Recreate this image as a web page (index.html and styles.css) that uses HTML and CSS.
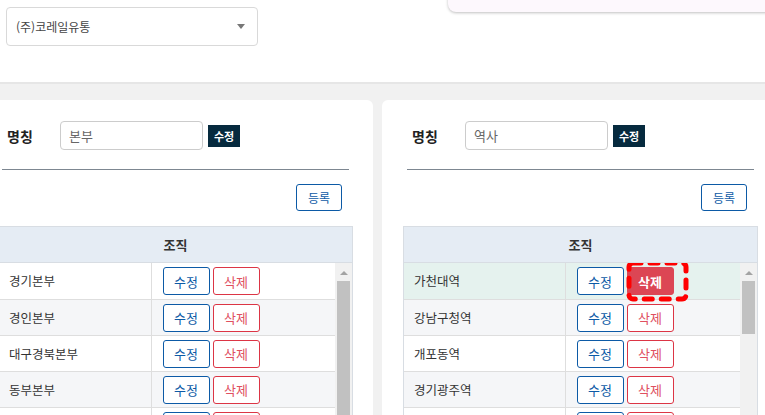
FILE: index.html
```html
<!DOCTYPE html>
<html lang="ko">

<head>
    <meta charset="UTF-8">
    <meta name="viewport" content="width=device-width, initial-scale=1.0">
    <title>조직 관리</title>
    <link rel="stylesheet" href="styles.css">
</head>

<body>
    <div class="toast"></div>

    <header class="top">
        <div class="select">
            <span>(주)코레일유통</span>
            <span class="caret"></span>
        </div>
    </header>

    <main class="panels">
        <section class="panel">
            <div class="name-row">
                <label>명칭</label>
                <input type="text" value="본부">
                <button class="btn-dark">수정</button>
            </div>
            <hr class="divider">
            <div class="actions">
                <button class="btn-reg">등록</button>
            </div>
            <div class="grid">
                <div class="grid-head">조직</div>
                <div class="grid-body">
                    <div class="rows">
                        <table class="narrow">
                            <tr><td class="name">경기본부</td><td class="act"><button class="btn-edit">수정</button><button class="btn-del">삭제</button></td></tr>
                            <tr><td class="name">경인본부</td><td class="act"><button class="btn-edit">수정</button><button class="btn-del">삭제</button></td></tr>
                            <tr><td class="name">대구경북본부</td><td class="act"><button class="btn-edit">수정</button><button class="btn-del">삭제</button></td></tr>
                            <tr><td class="name">동부본부</td><td class="act"><button class="btn-edit">수정</button><button class="btn-del">삭제</button></td></tr>
                            <tr><td class="name">부산본부</td><td class="act"><button class="btn-edit">수정</button><button class="btn-del">삭제</button></td></tr>
                            <tr><td class="name">서울본부</td><td class="act"><button class="btn-edit">수정</button><button class="btn-del">삭제</button></td></tr>
                        </table>
                    </div>
                    <div class="scrollbar">
                        <span class="arrow"></span>
                        <span class="thumb" style="height: 180px"></span>
                    </div>
                </div>
            </div>
        </section>

        <section class="panel">
            <div class="name-row">
                <label>명칭</label>
                <input type="text" value="역사">
                <button class="btn-dark">수정</button>
            </div>
            <hr class="divider">
            <div class="actions">
                <button class="btn-reg">등록</button>
            </div>
            <div class="grid">
                <div class="grid-head">조직</div>
                <div class="grid-body">
                    <div class="rows">
                        <table class="wide">
                            <tr class="sel"><td class="name">가천대역</td><td class="act"><button class="btn-edit">수정</button><span class="mark"><button class="btn-del active">삭제</button><svg class="dash" width="64" height="43" viewBox="0 0 64 43"><rect x="3" y="3" width="57" height="36" rx="4" fill="none" stroke="#f00" stroke-width="5" stroke-dasharray="8 9" stroke-linecap="round"/></svg></span></td></tr>
                            <tr><td class="name">강남구청역</td><td class="act"><button class="btn-edit">수정</button><button class="btn-del">삭제</button></td></tr>
                            <tr><td class="name">개포동역</td><td class="act"><button class="btn-edit">수정</button><button class="btn-del">삭제</button></td></tr>
                            <tr><td class="name">경기광주역</td><td class="act"><button class="btn-edit">수정</button><button class="btn-del">삭제</button></td></tr>
                            <tr><td class="name">경마공원역</td><td class="act"><button class="btn-edit">수정</button><button class="btn-del">삭제</button></td></tr>
                            <tr><td class="name">고속터미널역</td><td class="act"><button class="btn-edit">수정</button><button class="btn-del">삭제</button></td></tr>
                        </table>
                    </div>
                    <div class="scrollbar">
                        <span class="arrow"></span>
                        <span class="thumb" style="height: 53px"></span>
                    </div>
                </div>
            </div>
        </section>
    </main>
</body>

</html>
```

FILE: styles.css
```css
* {
    margin: 0;
    padding: 0;
    box-sizing: border-box;
}

html,
body {
    height: 100%;
    overflow: hidden;
}

body {
    font-family: "Noto Sans CJK KR", sans-serif;
    font-size: 13px;
    color: #333;
    background-color: #f1f1f1;
    position: relative;
}

button {
    font-family: inherit;
    cursor: pointer;
}

/* top bar */
.top {
    background-color: #fff;
    height: 84px;
    border-bottom: 2px solid #e6e6e6;
    padding: 7px 6px;
}

.select {
    width: 252px;
    height: 39px;
    border: 1px solid #d9d9d9;
    border-radius: 4px;
    display: flex;
    align-items: center;
    justify-content: space-between;
    padding: 0 12px 0 9px;
    font-size: 12px;
    color: #444;
}

.caret {
    border-left: 4px solid transparent;
    border-right: 4px solid transparent;
    border-top: 5px solid #777;
}

.toast {
    position: absolute;
    left: 448px;
    top: -40px;
    width: 340px;
    height: 52px;
    background-color: #fdf8fd;
    border-radius: 8px;
    box-shadow: 0 1px 3px rgba(0, 0, 0, 0.25);
}

/* panels */
.panels {
    display: flex;
    gap: 9px;
    margin: 16px 0 0 -23px;
}

.panel {
    flex: 0 0 396px;
    height: 420px;
    background-color: #fff;
    border-radius: 6px;
    padding: 21px 20px 0 21px;
}

.name-row {
    display: flex;
    align-items: center;
    padding-left: 9px;
}

.name-row label {
    width: 53px;
    font-size: 14px;
    font-weight: bold;
    color: #222;
}

.name-row input {
    width: 143px;
    height: 29px;
    border: 1px solid #ccc;
    border-radius: 4px;
    padding: 0 8px;
    font-family: inherit;
    font-size: 13px;
    color: #666;
}

.btn-dark {
    margin-left: 5px;
    width: 32px;
    height: 22px;
    border: none;
    background-color: #062a3e;
    color: #fff;
    font-size: 11px;
    font-weight: bold;
}

.divider {
    border: none;
    border-top: 1px solid #7d8791;
    margin: 19px 4px 0;
}

.actions {
    display: flex;
    justify-content: flex-end;
    margin-top: 14px;
    padding-right: 11px;
}

.btn-reg {
    width: 46px;
    height: 27px;
    border: 1px solid #0c5aa6;
    border-radius: 3px;
    background-color: #fff;
    color: #0c5aa6;
    font-size: 12px;
}

/* grid */
.grid {
    margin-top: 15px;
    border: 1px solid #d8dde3;
}

.grid-head {
    height: 36px;
    line-height: 35px;
    text-align: center;
    font-weight: bold;
    background-color: #e5ecf4;
    border-bottom: 1px solid #d8dde3;
}

.grid-body {
    display: flex;
    height: 200px;
    overflow: hidden;
}

.rows {
    flex: 1;
}

.scrollbar {
    flex: 0 0 17px;
    display: flex;
    flex-direction: column;
    align-items: center;
    background-color: #f1f1f1;
}

.arrow {
    margin: 8px 0 6px;
    border-left: 4px solid transparent;
    border-right: 4px solid transparent;
    border-bottom: 4px solid #a3a3a3;
}

.thumb {
    width: 13px;
    background-color: #c1c1c1;
}

table {
    width: 100%;
    border-collapse: collapse;
    table-layout: fixed;
}

td {
    height: 36px;
    border-bottom: 1px solid #dedede;
    vertical-align: middle;
    font-size: 12.5px;
}

td.name {
    padding-left: 10px;
    border-right: 1px solid #dedede;
}

.narrow td.name {
    width: 152px;
}

.wide td.name {
    width: 161px;
}

td.act {
    padding: 1px 0 0 11px;
    white-space: nowrap;
}

tr:nth-child(even) td {
    background-color: #f5f6f8;
}

tr.sel td {
    background-color: #e5f2ee;
}

.btn-edit,
.btn-del {
    width: 47px;
    height: 28px;
    border-radius: 3px;
    background-color: #fff;
    font-size: 13px;
    vertical-align: middle;
}

.btn-edit {
    border: 1px solid #0c5aa6;
    color: #0c5aa6;
}

.btn-del {
    margin-left: 3px;
    border: 1px solid #dc3545;
    color: #e0505f;
}

.btn-del.active {
    background-color: #dc4654;
    border-color: #dc4654;
    color: #fff;
    font-weight: bold;
}

.mark {
    position: relative;
    display: inline-block;
    vertical-align: middle;
}

.dash {
    position: absolute;
    left: 2px;
    top: -7px;
}
```
